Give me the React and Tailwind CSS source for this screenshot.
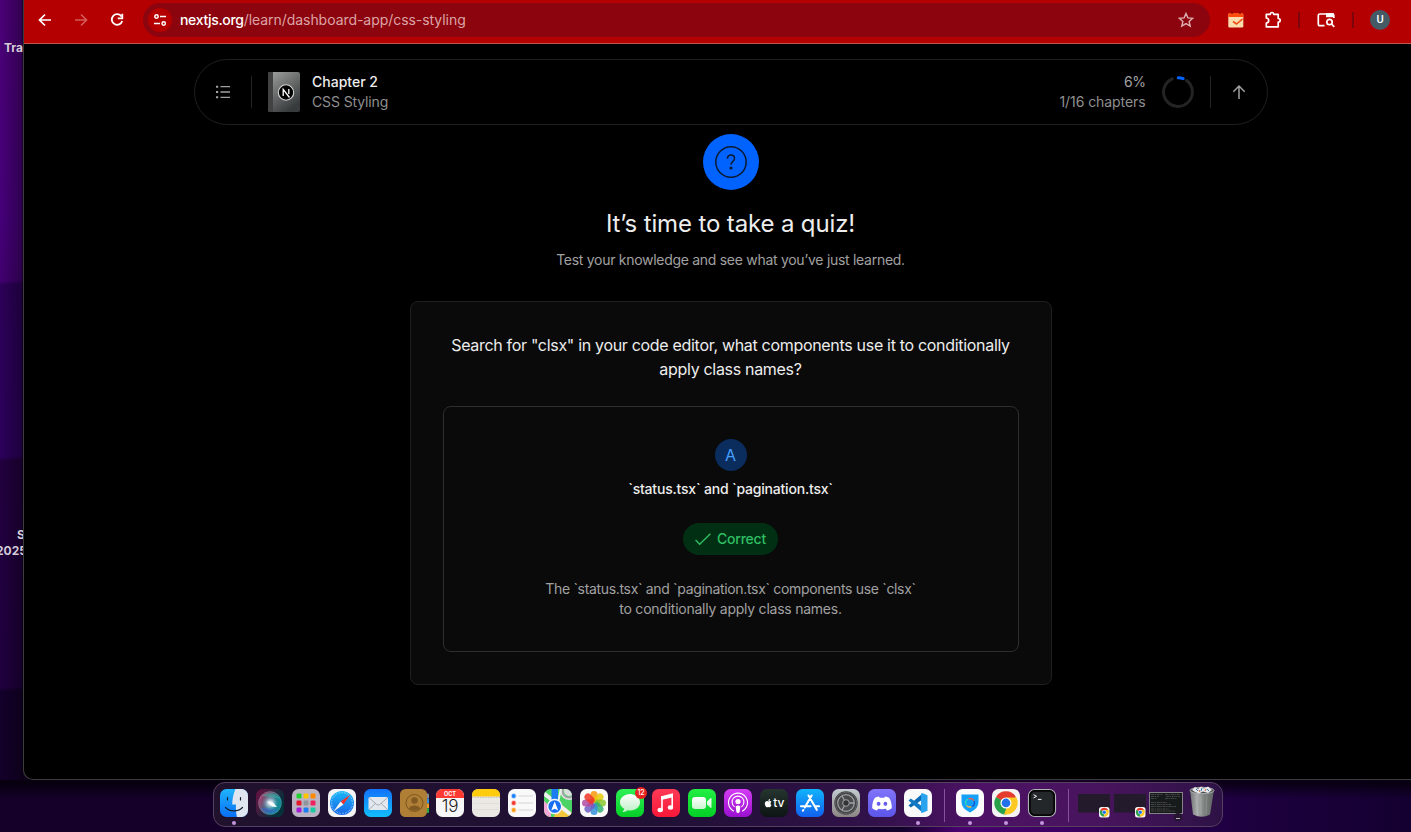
const G = ({ children, className = '', id, ...p }) => (
  <svg viewBox="0 0 28 28" className={'w-7 h-7 block overflow-visible ' + className} {...p}>{children}</svg>
);
const Tile = ({ fill }) => <rect width="28" height="28" rx="6.5" fill={fill} />;
const Lin = ({ id, a, b, x2 = 0, y2 = 1 }) => (
  <linearGradient id={id} x1="0" y1="0" x2={x2} y2={y2}><stop stopColor={a} /><stop offset="1" stopColor={b} /></linearGradient>
);

const Finder = () => (
  <G>
    <defs><Lin id="fi" a="#1fb4fd" b="#0a6ff5" /><clipPath id="fic"><rect width="28" height="28" rx="6.5" /></clipPath></defs>
    <Tile fill="url(#fi)" />
    <path clipPath="url(#fic)" d="M15.5 0C13.300 5 12.300 10 12.200 15.500H16C15.700 20 16 24 17 28H28V0Z" fill="#dfe6f0" />
    <path d="M7.500 8.500V11M20.500 8.500V11M5.500 18.500C10 23 18 23 22.500 18.500" fill="none" stroke="#15202f" strokeWidth="1.200" strokeLinecap="round" />
  </G>
);
const Siri = () => (
  <G>
    <defs>
      <Lin id="si" a="#6d0f42" b="#06303a" x2={0.9} y2={0.5} />
      <Lin id="sc" a="#e8356f" b="#19a9b4" x2={0.8} y2={0.5} />
      <radialGradient id="sb" cx=".52" cy=".5"><stop stopColor="#fff" /><stop offset=".3" stopColor="#d8eaf5" stopOpacity=".75" /><stop offset=".75" stopColor="#7fc8d8" stopOpacity=".1" /><stop offset="1" stopColor="#103" stopOpacity=".1" /></radialGradient>
    </defs>
    <Tile fill="url(#si)" />
    <circle cx="14" cy="14" r="11.500" fill="url(#sc)" opacity=".75" />
    <path d="M6 7C12 2 20 4 24 10C18 8 12 8 6 7Z" fill="#2fe0b0" opacity=".4" />
    <path d="M5 19C11 18 18 20 22 21C17 26 9 26 5 19Z" fill="#3d62d8" opacity=".5" />
    <circle cx="14" cy="14" r="9" fill="url(#sb)" />
    <path d="M11 12L17.500 14L21 18L16 17.500Z" fill="#fff" />
    <circle cx="14" cy="14" r="11.500" fill="none" stroke="#9fc0cc" strokeWidth=".5" opacity=".5" />
  </G>
);
const LaunchCells = [['#1fd12f', 4.5, 4.5], ['#ffc400', 11.5, 4.5], ['#ff8a00', 18.5, 4.5], ['#e51a2b', 4.5, 11.5], ['#8f959b', 11.5, 11.5], ['#f0225c', 18.5, 11.5], ['#a31cd8', 4.5, 18.5], ['#1e7cf5', 11.5, 18.5], ['#18ccA0', 18.5, 18.5]];
const Launchpad = () => (
  <G><Tile fill="#b9b3c2" />{LaunchCells.map(([c, x, y]) => <rect key={c} x={x} y={y} width="5" height="5" rx="1.300" fill={c} />)}</G>
);
const Safari = () => (
  <G>
    <defs><Lin id="sf" a="#1bb7f8" b="#1665e8" /></defs>
    <Tile fill="#f4f4f6" />
    <circle cx="14" cy="14" r="12" fill="url(#sf)" />
    <circle cx="14" cy="14" r="10.500" fill="none" stroke="#d9f0ff" strokeWidth="1.300" strokeDasharray=".4 1.200" />
    <path d="M22.500 5.500L12.600 12.600L15.400 15.400Z" fill="#f0342c" />
    <path d="M5.500 22.500L12.600 12.600L15.400 15.400Z" fill="#f5f5f5" />
  </G>
);
const Mail = () => (
  <G>
    <defs><Lin id="ma" a="#1272fb" b="#12befd" /></defs>
    <Tile fill="url(#ma)" />
    <rect x="4.500" y="8" width="19.500" height="13" rx="1.600" fill="#e4e8ec" />
    <path d="M5 8.700L12.700 15.500Q14.200 16.700 15.700 15.500L23.500 8.700M5 20.500L11.300 14.500M23.500 20.500L17.200 14.500" fill="none" stroke="#8e9aa8" strokeWidth=".8" />
  </G>
);
const Contacts = () => (
  <G>
    <rect x="22" y="4.500" width="7" height="5" rx="1" fill="#8c8c8c" /><rect x="22" y="9.500" width="7" height="5" fill="#2f8fd8" /><rect x="22" y="14.500" width="7" height="4.500" fill="#f19b22" /><rect x="22" y="19" width="7" height="5" rx="1" fill="#28a745" />
    <rect width="27" height="28" rx="5.500" fill="#b07f36" />
    <circle cx="14.500" cy="14" r="8.500" fill="none" stroke="#7d571e" strokeWidth="1" />
    <circle cx="14.500" cy="11.500" r="3.200" fill="#805a22" />
    <path d="M8.800 19.500C10 15.500 19 15.500 20.200 19.500C17 22.500 12 22.500 8.800 19.500Z" fill="#805a22" />
  </G>
);
const Calendar = () => (
  <div className="flex h-7 w-7 flex-col overflow-hidden rounded-[6.5px] bg-[#f7f7f7] text-center font-['Inter',sans-serif]">
    <div className="h-[9px] bg-[#fb3b33] text-[5.5px] font-bold leading-[10px] text-white">OCT</div>
    <div className="text-[17px] font-light leading-[17px] tracking-[-0.3px] text-[#222]">19</div>
  </div>
);
const Notes = () => (
  <G><Tile fill="#ebe9e4" /><path d="M0 7.500V6.500Q0 0 6.500 0H21.500Q28 0 28 6.500V7.500Z" fill="#ffcb0d" /><path d="M0 8.300H28" stroke="#9b938a" strokeWidth=".6" strokeDasharray=".8 .8" /><path d="M1 14.500H27M1 20.500H27" stroke="#dbd8d3" strokeWidth=".6" /></G>
);
const Reminders = () => (
  <G><Tile fill="#f9f9f9" />{[['#1c82f8', 7], ['#f33b30', 14], ['#fb9c1a', 21]].map(([c, y]) => (
    <g key={c}><circle cx="5.700" cy={y} r="2.700" fill={c} opacity=".3" /><circle cx="5.700" cy={y} r="1.900" fill={c} /><path d={`M10.500 ${y}H25`} stroke="#d0d0d2" strokeWidth=".9" /></g>
  ))}</G>
);
const Maps = () => (
  <G>
    <defs><clipPath id="mp"><rect width="28" height="28" rx="6.500" /></clipPath></defs>
    <g clipPath="url(#mp)">
      <rect width="28" height="28" fill="#4bd465" />
      <path d="M0 12L7 18V28H0Z" fill="#f3a7d6" />
      <path d="M14 13L28 24V28H10Z" fill="#f4c63b" />
      <path d="M-2 3L30 28" stroke="#f1f1ef" strokeWidth="4" />
      <circle cx="25" cy="2" r="8" fill="none" stroke="#e4e4e4" strokeWidth="2" /><circle cx="25" cy="2" r="6.500" fill="none" stroke="#a4a7aa" strokeWidth="2" /><circle cx="25" cy="2" r="5" fill="#dcdede" />
      <path d="M17 -1L14 14" stroke="#f1f1ef" strokeWidth="2" />
      <rect x="7.500" y="-1" width="6.500" height="14" fill="#1c7cf2" />
    </g>
    <circle cx="10.700" cy="17.500" r="7" fill="#1a6ff0" stroke="#f4f6fa" strokeWidth="1.400" />
    <path d="M10.700 12.500L14.200 21.500L10.700 19.700L7.200 21.500Z" fill="#fff" />
  </G>
);
const petals = ['#f9980b', '#e7c908', '#8bc62f', '#32b070', '#3390dc', '#6c5fc4', '#b24ba1', '#ee3526'];
const Photos = () => (
  <G><Tile fill="#fafafa" />{petals.map((c, i) => <rect key={c} x="10.500" y="2" width="7" height="11.500" rx="3.500" fill={c} opacity=".85" transform={`rotate(${i * 45} 14 14)`} />)}</G>
);
const Messages = () => (
  <div className="relative">
    <G>
      <defs><Lin id="ms" a="#2ff056" b="#06cf27" /><Lin id="mb" a="#ffffff" b="#bdf0c5" /></defs>
      <Tile fill="url(#ms)" />
      <path d="M14 5C8.500 5 4 8.700 4 13.200C4 16 5.600 18.300 8.100 19.800C8 21.200 7.300 22.200 6.400 23C8.600 23 10.400 22.200 11.600 21.200C19 22.500 24 18.300 24 13.200C24 8.700 19.500 5 14 5Z" fill="url(#mb)" />
    </G>
    <div className="absolute -right-[3px] -top-[2px] h-3 w-3 rounded-full bg-[#e8231f] text-center font-['Inter',sans-serif] text-[7px] font-medium leading-3 text-white">12</div>
  </div>
);
const Music = () => (
  <G><defs><Lin id="mu" a="#fc3a56" b="#fa1738" /></defs><Tile fill="url(#mu)" />
    <path d="M10 7V21M20.200 5V18.500" stroke="#fff" strokeWidth="1.600" /><path d="M9.200 7.200L21 4.300V8.300L9.200 11Z" fill="#fff" />
    <ellipse cx="8.200" cy="21" rx="2.700" ry="2.200" fill="#fff" /><ellipse cx="18.500" cy="18.500" rx="2.700" ry="2.200" fill="#fff" /></G>
);
const FaceTime = () => (
  <G><defs><Lin id="ft" a="#22ee43" b="#04cf26" /><Lin id="fb" a="#fff" b="#c9f5d0" /></defs><Tile fill="url(#ft)" />
    <rect x="4" y="8" width="14" height="12" rx="3.200" fill="url(#fb)" /><path d="M19 12.500L22.500 9.300Q23.500 8.700 23.500 10V18Q23.500 19.300 22.500 18.700L19 15.500Z" fill="url(#fb)" /></G>
);
const Podcasts = () => (
  <G><defs><Lin id="po" a="#d43bf4" b="#9a10cf" /></defs><Tile fill="url(#po)" />
    <g fill="none" stroke="#fff" strokeWidth="1.100" strokeLinecap="round"><path d="M9.500 22A9.500 9.500 0 1 1 18.500 22" /><path d="M10.300 17.600A5.900 5.900 0 1 1 17.700 17.600" /></g>
    <circle cx="14" cy="12.500" r="2.600" fill="#fff" /><path d="M11.700 17.500Q14 15.400 16.300 17.500L15.600 23Q14 25.300 12.400 23Z" fill="#fff" /></G>
);
const AppleTV = () => (
  <div className="flex h-7 w-7 items-center justify-center gap-[0.5px] rounded-[6.5px] bg-gradient-to-b from-[#263530] to-[#0e1414]">
    <svg viewBox="0 0 24 24" className="-mt-px h-[10px] w-[9px]" fill="#fff"><path d="M17.500 12.700c0-2.600 2.100-3.800 2.200-3.900-1.200-1.800-3.100-2-3.700-2-1.600-.2-3.100.9-3.900.9s-2-.9-3.300-.9C5 6.900 2.200 9.300 2.200 14c0 4 3 9.500 5.600 9.500 1.300 0 1.800-.8 3.500-.8s2.100.8 3.500.8c2.500 0 4.700-4.500 5.200-6-2.600-1-2.500-4-2.500-4.800zM15.200 5c.9-1.100 1.300-2.400 1.200-4-1.400.1-2.800.8-3.600 1.800-.8.900-1.400 2.300-1.200 3.700 1.300.1 2.700-.6 3.600-1.500z" /></svg>
    <span className="font-['Inter',sans-serif] text-[12px] font-medium leading-none tracking-[-0.2px] text-white">tv</span>
  </div>
);
const AppStore = () => (
  <G><defs><Lin id="as" a="#10b4fb" b="#1260ee" /></defs><Tile fill="url(#as)" />
    <g stroke="#fff" strokeWidth="2.100" strokeLinecap="round"><path d="M15.600 6.500L8.800 18.500M12.500 6.500L20.800 20.800M5 17.300H14.500M19 17.300H23M7.300 21L6.900 21.700" /></g></G>
);
const Settings = () => (
  <G><defs><Lin id="se" a="#c3ccd2" b="#8b8582" /></defs><Tile fill="url(#se)" />
    <circle cx="14" cy="14" r="11.700" fill="#3f4143" /><circle cx="14" cy="14" r="10.600" fill="none" stroke="#898b8d" strokeWidth="1" strokeDasharray=".7 .7" />
    <circle cx="14" cy="14" r="8.300" fill="#4a4b4c" stroke="#a2a4a6" strokeWidth="1.200" /><circle cx="14" cy="14" r="3.300" fill="#333" stroke="#a2a4a6" strokeWidth="1" />
    <path d="M17.500 14H22M12.300 11L10 7M12.300 17L10 21" stroke="#a2a4a6" strokeWidth="1.300" /></G>
);
const Discord = () => (
  <G><defs><Lin id="di" a="#8174fb" b="#5c55e8" /></defs><Tile fill="url(#di)" />
    <path d="M11 7.500C9.300 7.800 8 8.200 6.900 8.800C4.900 11.700 4 15.500 4.200 19.300C5.800 20.500 7.400 21.200 9 21.500L10.200 19.800C12.500 20.400 15.500 20.400 17.800 19.800L19 21.500C20.600 21.200 22.200 20.500 23.800 19.300C24 15.500 23.100 11.700 21.100 8.800C20 8.200 18.700 7.800 17 7.500L16.300 8.800C14.800 8.600 13.200 8.600 11.700 8.800Z" fill="#fff" />
    <ellipse cx="10.600" cy="14.800" rx="1.900" ry="2.100" fill="#665df0" /><ellipse cx="17.400" cy="14.800" rx="1.900" ry="2.100" fill="#665df0" /></G>
);
const VSCode = () => (
  <G><Tile fill="#fafafa" />
    <path d="M18.500 4.500L4.500 16.500L6.800 18.600L18.500 10.500Z" fill="#0a6bb5" />
    <path d="M18.500 23.500L4.500 11.500L6.800 9.400L18.500 17.500Z" fill="#1279c4" />
    <path d="M18 4L23.500 6.300V21.700L18 24Q17 24 17 22.500V5.500Q17 4 18 4Z" fill="#2aa3ef" /></G>
);
const Shield = () => (
  <G><Tile fill="#fcfcfc" /><path d="M5.500 5.500H22.500V13Q22.500 19.500 14 23.500Q5.500 19.500 5.500 13Z" fill="#14a0f7" />
    <g fill="none" strokeWidth="1.300" strokeLinecap="round"><path d="M10 15.500A4.200 4.200 0 0 1 12 10" stroke="#2be0b4" /><path d="M13 9.700A4.200 4.200 0 0 1 17.500 11.200" stroke="#f55a4c" /><path d="M18.200 12.500A4.200 4.200 0 0 1 16 17.500" stroke="#154fd4" /><path d="M15 17.800A4.200 4.200 0 0 1 11 17" stroke="#ffb72f" /></g></G>
);
const ChromeMark = () => (
  <>
    <path d="M14 14L3.600 8A12 12 0 0 1 24.400 8Z" fill="#e53a2e" />
    <path d="M14 14L24.400 8A12 12 0 0 1 14 26Z" fill="#fcc822" />
    <path d="M14 14L14 26A12 12 0 0 1 3.600 8Z" fill="#2aa24c" />
    <path d="M14 8.300H24.500A12 12 0 0 1 25.900 12L18 14Z" fill="#fcc822" />
    <path d="M8.700 16.500L3.600 8L9 11Z" fill="#2aa24c" />
    <path d="M19 17L14 26L12 25.800L15 18Z" fill="#fcc822" />
    <circle cx="14" cy="14" r="5.700" fill="#fff" /><circle cx="14" cy="14" r="4.500" fill="#2271e8" />
  </>
);
const Chrome = () => <G><Tile fill="#f5f3f4" /><g transform="translate(.4 .4) scale(.97)"><ChromeMark /></g></G>;
const Terminal = () => (
  <G><rect x=".5" y=".5" width="27" height="27" rx="6.300" fill="#1f2224" stroke="#aeb2b5" strokeWidth="1.200" /><rect x="1.900" y="1.900" width="24.200" height="24.200" rx="5" fill="#24272a" stroke="#050505" strokeWidth="1.700" />
    <path d="M5.500 5.700L8.600 7.300L5.500 8.900M9.800 10.400H13.500" fill="none" stroke="#f4f4f4" strokeWidth="1" /></G>
);
const Minimized = () => (
  <svg viewBox="0 0 32 28" className="block h-7 w-8 overflow-visible"><rect x="0" y="5" width="32" height="18.500" fill="#231a2b" /><g transform="translate(21 18) "><rect width="10.500" height="10.500" rx="2.500" fill="#f6f4f5" /><g transform="scale(.375)"><ChromeMark /></g></g></svg>
);
const MinTerminal = () => (
  <svg viewBox="0 0 34 28" className="block h-7 w-[34px] overflow-visible">
    <rect x=".5" y="3.500" width="33" height="21" fill="#181b1b" stroke="#858289" strokeWidth="1" />
    <path d="M2 5.500H14M16 5.500H31M2 7.500H10M17 7.500H31M2 9.500H8M16 9.500H28M2 13.500H18M2 15.500H22M2 17.500H27M2 20H20M2 22H26" stroke="#7b7f7b" strokeWidth=".7" strokeDasharray="3 .6 1.500 .7" opacity=".6" />
    <circle cx="29" cy="28" r="4" fill="#25152f" /><path d="M27 29.500H31" stroke="#ddd" strokeWidth=".8" />
  </svg>
);
const Trash = () => (
  <svg viewBox="0 0 26 32" className="block h-8 w-[26px]">
    <defs><linearGradient id="tr"><stop stopColor="#6f7373" /><stop offset=".3" stopColor="#a9adac" /><stop offset=".6" stopColor="#7c807f" /><stop offset="1" stopColor="#606463" /></linearGradient></defs>
    <path d="M1 4L4 28.500Q13 33 21 28.500L25 4Z" fill="url(#tr)" />
    <ellipse cx="13" cy="4.500" rx="12" ry="3.200" fill="#4a4d4f" stroke="#b5b8b8" strokeWidth=".9" />
    <path d="M3 4L6 1L9 3L12 .5L15 2.500L19 .5L23 4L19 7L14 5.500L10 7.500L6 6Z" fill="#e6e8ea" />
    <path d="M7 3l2 2M13 2l-1 3M18 3l2 2" stroke="#3579b5" strokeWidth="1" /><path d="M10 4l1 2M16 5l1-2" stroke="#c76442" strokeWidth="1" />
    <path d="M7 9l1.500 19M12 10v19M18 9l-1 19" stroke="#c6c9c8" strokeWidth=".5" opacity=".5" />
  </svg>
);

const dockApps = [[Finder, 1], [Siri], [Launchpad], [Safari], [Mail], [Contacts], [Calendar], [Notes], [Reminders], [Maps], [Photos], [Messages], [Music], [FaceTime], [Podcasts], [AppleTV], [AppStore], [Settings], [Discord], [VSCode, 1]];
const extraApps = [[Shield, 1], [Chrome, 1], [Terminal, 1]];
const DockItem = ({ icon: Icon, running }) => (
  <div className="flex flex-col items-center">
    <Icon />
    {running ? <div className="mt-1 h-1 w-1 rounded-full bg-[#c495dd]" /> : null}
  </div>
);

const Dock = () => (
  <div className="ml-[213px] mt-0.5 flex h-[45px] w-[1010px] items-start rounded-[12px] border border-[#54405f] bg-[linear-gradient(90deg,#20112d_0%,#201036_45%,#311149_65%,#4d1265_76%,#48145d_88%,#2d1245_100%)] pl-1.5 pt-1.5">
    <div className="flex gap-2">{dockApps.map(([I, r], i) => <DockItem key={i} icon={I} running={r} />)}</div>
    <div className="ml-3 mr-[11px] h-[33px] w-px bg-[#84539a]" />
    <div className="flex gap-2">{extraApps.map(([I, r], i) => <DockItem key={i} icon={I} running={r} />)}</div>
    <div className="ml-3 mr-[9px] h-[33px] w-px bg-[#84539a]" />
    <div className="flex items-start gap-1">
      <Minimized /><Minimized />
      <div className="-ml-px"><MinTerminal /></div>
      <div className="-mt-[3px] ml-0.5"><Trash /></div>
    </div>
  </div>
);

const Toolbar = () => (
  <header className="flex h-11 shrink-0 items-start border-b border-[#c0544f] bg-[#b40000] text-white">
    <div className="flex h-10 items-center pl-[13px]">
      <svg viewBox="0 0 16 16" className="h-4 w-4" fill="none" stroke="#fff" strokeWidth="1.700"><path d="M14 8H3M8 2.500L2.500 8L8 13.500" /></svg>
      <svg viewBox="0 0 16 16" className="ml-5 h-4 w-4" fill="none" stroke="#d45c5c" strokeWidth="1.700"><path d="M2 8H13M8 2.500L13.500 8L8 13.500" /></svg>
      <svg viewBox="0 0 16 16" className="ml-5 h-4 w-4" fill="none" stroke="#fff" strokeWidth="1.800"><path d="M12.500 4.500A5.300 5.300 0 1 0 13.200 9" /><path d="M13.300 1.800V6.300H8.800" /></svg>
    </div>
    <div className="ml-[18px] mt-[3px] flex h-[34px] w-[1067px] items-center rounded-full bg-[#8c040d] pl-[5px] pr-4">
      <div className="flex h-6 w-6 items-center justify-center rounded-full bg-[#b40000]">
        <svg viewBox="0 0 14 14" className="h-[14px] w-[14px]" fill="none" stroke="#fff" strokeWidth="1.500"><circle cx="3.500" cy="3.500" r="1.700" /><path d="M7 3.500H13M1 10.500H7" /><circle cx="10.700" cy="10.500" r="1.700" /></svg>
      </div>
      <div className="-mt-px ml-2 flex-1 font-['Inter',sans-serif] text-[14px] tracking-[-0.05px] text-[#dca3a6]"><span className="font-medium tracking-[-0.32px] text-white">nextjs.org</span>/learn/dashboard-app/css-styling</div>
      <svg viewBox="0 0 16 16" className="h-4 w-4" fill="none" stroke="#dfb0b3" strokeWidth="1.400"><path d="M8 1.500L9.900 5.900L14.700 6.300L11.100 9.400L12.200 14.100L8 11.600L3.800 14.100L4.900 9.400L1.300 6.300L6.100 5.900Z" /></svg>
    </div>
    <div className="flex h-10 items-center">
      <svg viewBox="0 0 16 16" className="ml-[18px] h-4 w-4"><rect x=".3" y="1.500" width="15" height="14" rx="1.200" fill="#fbdcae" /><path d="M.3 2.700Q.3 1 1.500 1H14Q15.300 1 15.300 2.700V5H.3Z" fill="#ff4b0d" /><path d="M4 0V2M12 0V2" stroke="#611" strokeWidth="1.200" /><path d="M5 9.500L8.500 12L14.500 7" fill="none" stroke="#ee4c13" strokeWidth="1.600" /></svg>
      <svg viewBox="0 0 18 18" className="ml-5 h-[18px] w-[18px]" fill="none" stroke="#fff" strokeWidth="1.700" strokeLinejoin="round"><path d="M2.300 3.300H6.300Q6.300 1.500 8 1.500T9.700 3.300H14.200V7.500Q16.200 7.500 16.200 9.300T14.200 11.200V15.800H2.300V12.200Q4.700 11.800 4.700 9.500T2.300 7Z" /></svg>
      <div className="ml-4 h-4 w-0.5 bg-[#7d050b]" />
      <svg viewBox="0 0 18 16" className="ml-[17px] h-4 w-[18px]" fill="none" stroke="#fff" strokeWidth="1.700"><path d="M7.500 13.700H3Q1.300 13.700 1.300 12V3.500Q1.300 2 3 2H15.500Q16.800 2 16.800 3.500V6" /><path d="M9 3.200H16.800" strokeWidth="4" /><circle cx="12.500" cy="10" r="2.700" /><path d="M14.500 12L17.300 14.800" /></svg>
      <div className="ml-[17px] h-4 w-0.5 bg-[#7d050b]" />
      <div className="ml-4 h-5 w-5 rounded-full bg-[#455a64] text-center font-['Roboto',sans-serif] text-[11px] font-medium leading-5">U</div>
    </div>
  </header>
);

const ChapterBar = () => (
  <nav className="mt-[15px] flex h-[66px] w-[1074px] items-center rounded-full border border-[#1f1f1f] px-5 text-[14px] leading-5 text-[#8f8f8f]">
    <svg viewBox="0 0 16 16" className="h-4 w-4" fill="none" stroke="#a1a1a1" strokeWidth="1.300"><path d="M5.500 2.700H15M5.500 8H15M5.500 13.300H15" /><path d="M1 2.700H3.200M1 8H3.200M1 13.300H3.200" strokeWidth="2" /></svg>
    <div className="ml-5 h-8 w-px bg-[#242424]" />
    <svg viewBox="0 0 32 40" className="ml-4 h-10 w-8">
      <defs><linearGradient id="bk" x1="0" y1="0" x2=".6" y2="1"><stop stopColor="#a2a2a2" /><stop offset="1" stopColor="#373b3b" /></linearGradient></defs>
      <rect width="32" height="40" rx="2" fill="url(#bk)" /><path d="M2 0H5V40H2Q0 40 0 38V2Q0 0 2 0Z" fill="#424242" />
      <circle cx="18" cy="20.500" r="7.700" fill="#000" stroke="#d5d5d5" strokeWidth="1.100" />
      <path d="M15.200 24V17.300L21.500 25.500M20.800 17V22" fill="none" stroke="#fff" strokeWidth="1.300" />
    </svg>
    <div className="ml-[12.5px]"><p className="font-medium text-[#ededed]">Chapter 2</p><p className="tracking-[-0.12px]">CSS Styling</p></div>
    <div className="-mr-px ml-auto text-right"><p className="tracking-[-0.5px] text-[#a1a1a1]">6%</p><p className="tracking-[-0.08px]">1/16 chapters</p></div>
    <svg viewBox="0 0 32 32" className="ml-[17px] h-8 w-8" fill="none" strokeWidth="3" strokeLinecap="round"><path d="M24.600 4.500A14.400 14.400 0 1 1 10.200 2.800" stroke="#242424" /><path d="M16.300 1.700A14.400 14.400 0 0 1 21.200 2.600" stroke="#0062ff" /></svg>
    <div className="ml-4 h-8 w-px bg-[#242424]" />
    <svg viewBox="0 0 16 16" className="ml-5 h-4 w-4" fill="none" stroke="#a1a1a1" strokeWidth="1.500"><path d="M8 15V2M2.300 7.700L8 2L13.700 7.700" /></svg>
  </nav>
);

const Quiz = () => (
  <main className="flex flex-col items-center text-center text-[#a1a1a1]">
    <div className="mt-[9px] flex h-14 w-14 items-center justify-center rounded-full bg-[#0062ff]">
      <svg viewBox="0 0 32 32" className="h-8 w-8" fill="none" stroke="#0b1a30" strokeWidth="1.500"><circle cx="16" cy="16" r="15.200" /><path d="M12.500 12.800Q12.500 9 16 9T19.500 12.400C19.500 15.500 16 15.200 16 18.700" /><circle cx="16" cy="22" r=".8" fill="#0b1a30" /></svg>
    </div>
    <h1 className="mt-[18px] text-[24px] leading-8 tracking-[-0.14px] text-[#ededed]">It’s time to take a quiz!</h1>
    <p className="mt-[10px] text-[14px] leading-5 tracking-[-0.29px]">Test your knowledge and see what you’ve just learned.</p>
    <section className="mt-[31px] flex w-[642px] flex-col items-center rounded-lg border border-[#1f1f1f] bg-[#0a0a0a] px-8 pb-8 pt-[31px]">
      <h2 className="whitespace-nowrap text-[16px] leading-6 tracking-[-0.31px] text-[#ededed]">Search for "clsx" in your code editor, what components use it to conditionally<br />apply class names?</h2>
      <div className="mt-[25px] flex h-[246px] w-[576px] flex-col items-center rounded-lg border border-[#2e2e2e] pt-8 text-[14px] leading-5">
        <div className="h-8 w-8 rounded-full bg-[#0a2d5e] text-[16px] leading-8 text-[#479ffa]">A</div>
        <p className="mt-2 font-medium tracking-[-0.2px] text-[#ededed]">`status.tsx` and `pagination.tsx`</p>
        <div className="mt-6 flex h-8 items-center gap-1.5 rounded-full bg-[#002f14] px-3 font-medium text-[#2fbf62]">
          <svg viewBox="0 0 16 16" className="h-4 w-4" fill="none" stroke="currentColor" strokeWidth="1.400"><path d="M.6 9L4.700 13.200L15.400 2.800" /></svg>
          <span className="tracking-[-0.22px]">Correct</span>
        </div>
        <p className="mt-6 tracking-[-0.33px]">The `status.tsx` and `pagination.tsx` components use `clsx`<br /><span className="tracking-[-0.24px]">to conditionally apply class names.</span></p>
      </div>
    </section>
  </main>
);

export default function App() {
  return (
    <div className="h-[832px] w-[1411px] overflow-hidden bg-[linear-gradient(180deg,transparent_0%,transparent_93%,#000000b0_94%,transparent_96%),linear-gradient(90deg,#140029_0%,#13002b_64%,#4a0070_68%,#3a0060_76%,#1d003f_88%,#140030_100%)] font-['Inter',sans-serif]">
      <div className="flex h-[780px]">
        <aside className="flex w-[23px] shrink-0 flex-col overflow-hidden bg-[linear-gradient(90deg,transparent_0%,#00000050_90%,#000000a0_100%),linear-gradient(176deg,#4c0078_0%,#46007a_28%,#420070_36%,#2c0058_36.500%,#2c005c_58.500%,#22003f_59%,#20003f_88%,#14002b_88.500%,#140029_100%)] text-[12px] font-bold leading-4 text-[#d3cbd8]">
          <div className="whitespace-nowrap pl-1 pt-10">Tra</div>
          <div className="mt-[471px] flex w-[58px] -translate-x-1 flex-col whitespace-nowrap"><span className="pl-[21px]">S</span><span>2025</span></div>
        </aside>
        <div className="flex flex-1 flex-col overflow-hidden rounded-bl-[10px] border-b border-l border-[#3c3c3c] bg-black">
          <Toolbar />
          <div className="ml-[13px] flex w-[1387px] flex-col items-center">
            <ChapterBar />
            <Quiz />
          </div>
        </div>
      </div>
      <Dock />
    </div>
  );
}
